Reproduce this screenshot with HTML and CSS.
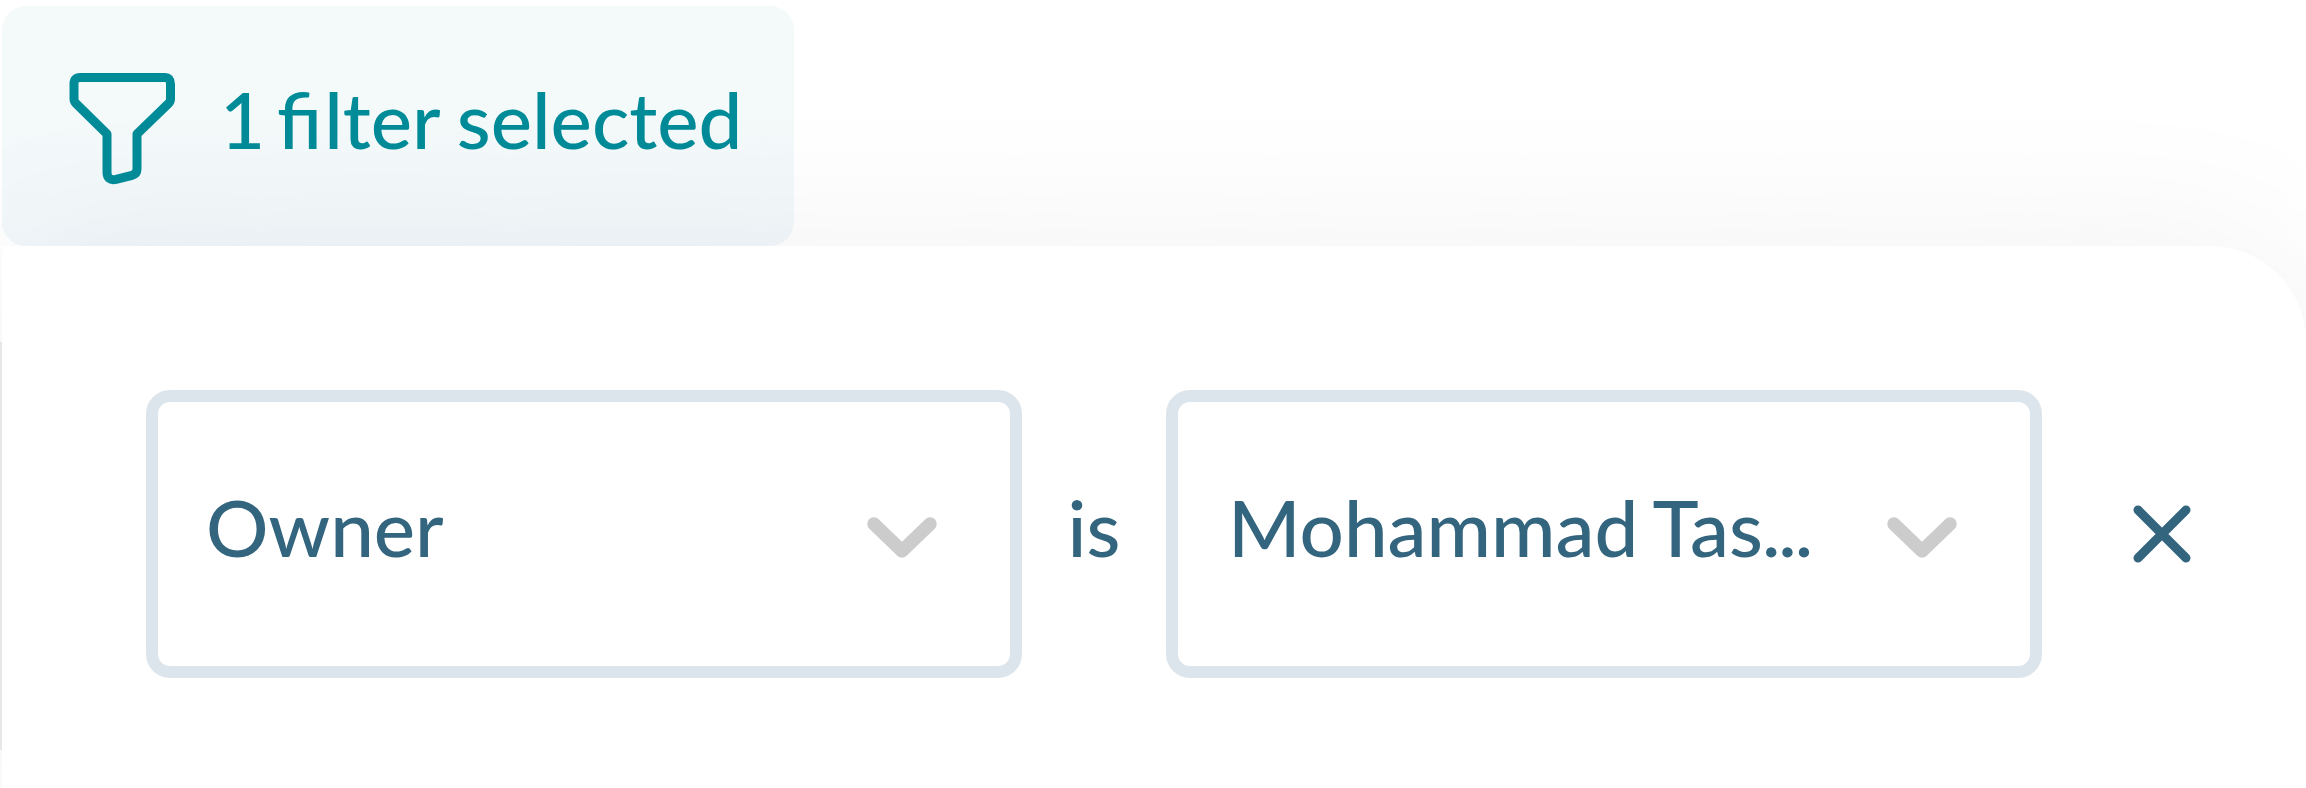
FILE: index.html
```html
<!DOCTYPE html>
<html lang="en">
<head>
  <meta charset="UTF-8">
  <meta name="viewport" content="width=device-width, initial-scale=1.0">
  <title>Filters</title>
  <link rel="stylesheet" href="styles.css">
</head>
<body>
  <div class="filter-button">
    <svg class="filter-icon" width="120" height="120" viewBox="0 0 120 120">
      <path d="M18 11.5H102.5Q108.5 11.5 108.5 18V33Q108.5 35.5 106.5 37.5L75 68V103Q75 108 70 109.3L54 113.4Q45 115 45 106V68L14 37.5Q12 35.5 12 33V18Q12 11.5 18 11.5Z"/>
    </svg>
    <span class="filter-label"><span class="count">1</span> <span class="fi">fi</span>lter selected</span>
  </div>

  <!-- Filter Panel -->
  <div class="filter-panel">
    <div class="filter-row">
      <div class="select">
        <span class="select-value">Owner</span>
        <svg class="chevron" width="72" height="48" viewBox="0 0 72 48">
          <path d="M8 10L36 37L64 10"/>
        </svg>
      </div>
      <span class="operator">is</span>
      <div class="select">
        <span class="select-value user">Mohammad Tas<span class="dots">...</span></span>
        <svg class="chevron" width="72" height="48" viewBox="0 0 72 48">
          <path d="M8 10L36 37L64 10"/>
        </svg>
      </div>
      <svg class="remove" width="60" height="60" viewBox="0 0 60 60">
        <path d="M6 6L54 54M54 6L6 54"/>
      </svg>
    </div>
  </div>
</body>
</html>
```
FILE: styles.css
```css
body {
  font-family: Lato, sans-serif;
  font-size: 78px;
  font-weight: 500;
  line-height: 96px;
  background-color: white;
  margin: 0;
  padding: 6px 0 0 2px;
  height: 788px;
  box-sizing: border-box;
  overflow: hidden;
}
svg {
  fill: none;
  stroke-linecap: round;
  stroke-linejoin: round;
  flex-shrink: 0;
}
.filter-button {
  display: flex;
  align-items: center;
  box-sizing: border-box;
  width: 792px;
  height: 240px;
  padding-left: 60px;
  border-radius: 24px;
  background: linear-gradient(#F4FAFA 45%, #F2F7FB);
  color: #008B98;
}
.filter-icon {
  stroke: #008B98;
  stroke-width: 9;
}
.filter-label {
  margin-left: 38px;
  padding-bottom: 14px;
  white-space: nowrap;
  word-spacing: -2px;
}
.count {
  margin-right: -6px;
}
.fi {
  margin-right: 2px;
}
.filter-panel {
  position: relative;
  box-sizing: border-box;
  width: 2304px;
  height: 542px;
  padding: 144px 0 0 144px;
  background-color: white;
  border-radius: 0 96px 0 0;
  box-shadow: 0 18px 180px rgba(0, 0, 0, 0.08);
}
/* edge of the table behind the panel */
.filter-panel::before {
  content: "";
  position: absolute;
  left: -2px;
  top: 96px;
  width: 2px;
  height: 408px;
  background-color: #E6E7E8;
}
.filter-row {
  display: flex;
  align-items: center;
  color: #33657F;
}
.select {
  display: flex;
  align-items: center;
  justify-content: space-between;
  box-sizing: border-box;
  width: 876px;
  height: 288px;
  padding: 0 72px 0 48px;
  border: 12px solid #DDE5EC;
  border-radius: 24px;
}
.select-value {
  padding-bottom: 14px;
  white-space: nowrap;
}
.user {
  padding-left: 2px;
  word-spacing: -3px;
}
.dots {
  margin-left: -1px;
  letter-spacing: -2px;
}
.chevron {
  stroke: #CCCCCC;
  stroke-width: 13.5;
  margin-top: 8px;
}
.operator {
  width: 144px;
  padding-bottom: 14px;
  text-align: center;
}
.remove {
  stroke: #33657F;
  stroke-width: 9;
  margin-left: 90px;
}
```
